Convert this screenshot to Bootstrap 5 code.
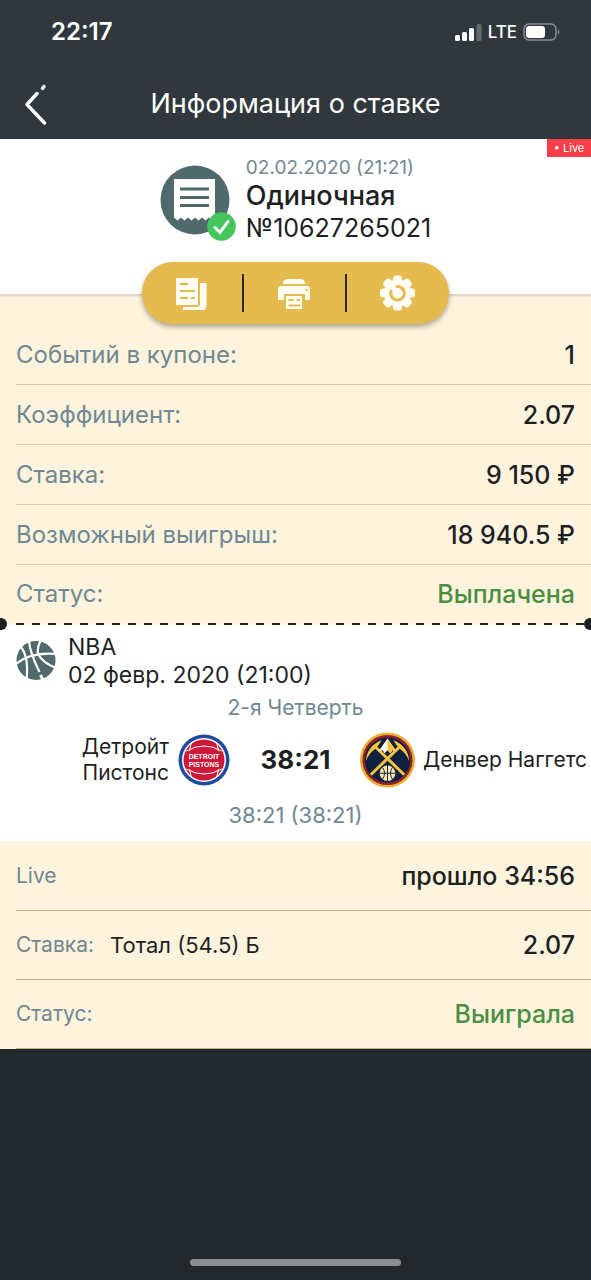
<!DOCTYPE html>
<html lang="ru">
<head>
<meta charset="utf-8">
<meta name="viewport" content="width=device-width, initial-scale=1">
<title>Информация о ставке</title>
<link href="https://cdn.jsdelivr.net/npm/bootstrap@5.3.0/dist/css/bootstrap.min.css" rel="stylesheet">
<style>
  :root {
    --ink: #1d1f23;
    --slate: #30383e;
    --muted: #6f8893;
    --cream: #fef3dd;
    --gold: #e5bb4f;
  }
  body { background: #23282c; color: var(--ink); font-family: Inter, "Liberation Sans", sans-serif; font-size: 24px; line-height: 32px; }
  .app-head { background: var(--slate); color: #fff; }
  .status-bar { height: 64px; padding: 0 30px 0 51px; font-size: 24px; }
  .status-icons { gap: 6px; font-size: 17px; }
  .title-bar { display: grid; grid-template-columns: 72px 1fr 72px; height: 75px; padding-top: 4px; }
  .title-bar h1 { font-size: 27px; line-height: 32px; font-weight: 400; }
  .back-btn { border: 0; padding: 0 0 0 24px; text-align: left; background: none; line-height: 0; }
  .bet-head { padding: 17px 0 50px; border-bottom: 1px solid #dcd6c8; box-shadow: 0 1px 2px rgba(0,0,0,.15); }
  .bet-head .when { font-size: 19px; line-height: 24px; color: var(--muted); }
  .bet-head h2 { font-size: 27px; line-height: 32px; font-weight: 500; }
  .bet-number { font-size: 25px; }
  .live-tag { background: #f53f48; color: #fff; font-size: 11px; line-height: 18px; width: 44px; }
  .tools { width: 307px; height: 62px; margin: -33px auto 1px; border-radius: 31px; background: var(--gold); box-shadow: 0 3px 5px rgba(60,50,20,.4); }
  .tools button { border: 0; background: none; padding: 0; line-height: 0; }
  .tools .divider { width: 2px; height: 38px; background: #2b2a22; }
  .sheet { background: var(--cream); }
  .line-item { margin-left: 16px; padding-right: 16px; height: 60px; border-bottom: 1px solid #d3c8b0; }
  .line-item dt { font-weight: 400; color: var(--muted); }
  .line-item dd { font-size: 25px; font-weight: 500; }
  .line-item .won { color: #4a8f3f; }
  .summary .line-item:last-child { border-bottom: 0; height: 58px; }
  .outcome { padding-top: 1px; }
  .outcome .line-item { height: 69px; border-color: #bdb07f; }
  .outcome dt { font-size: 21px; }
  .outcome .pick { font-size: 22px; }
  .tear { height: 2px; background: repeating-linear-gradient(90deg, #1d1f23 0 8px, transparent 8px 16px) 16px 0 / calc(100% - 22px) 2px no-repeat; }
  .tear::before, .tear::after { content: ""; position: absolute; top: -5px; width: 12px; height: 12px; border-radius: 50%; background: #1d1f23; }
  .tear::before { left: -5px; }
  .tear::after { right: -5px; }
  .event { padding: 8px 0 4px; }
  .event-head { padding-left: 16px; gap: 12px; font-size: 23px; line-height: 28px; }
  .period { font-size: 21px; line-height: 38px; color: var(--muted); }
  .match { height: 66px; font-size: 21px; line-height: 26px; }
  .side { flex: 1 1 0; min-width: 0; }
  .score { width: 129px; font-size: 26px; font-weight: 700; }
  .total { font-size: 22px; line-height: 44px; color: var(--muted); }
  .home-bar { width: 211px; height: 7px; border-radius: 4px; background: #8b8d8f; margin-bottom: 14px; }
</style>
</head>
<body class="min-vh-100 d-flex flex-column overflow-x-hidden">
<header class="app-head">
  <div class="status-bar d-flex justify-content-between align-items-center">
    <span class="fw-semibold">22:17</span>
    <span class="status-icons d-flex align-items-center fw-medium">
      <svg width="27" height="18" viewBox="0 0 27 18" fill="#fff" aria-hidden="true"><rect x="0" y="12" width="5" height="6" rx="1.5"/><rect x="7" y="9" width="5" height="9" rx="1.5"/><rect x="14" y="5" width="5" height="13" rx="1.5"/><rect x="21.500" y="1" width="5" height="17" rx="1.500" opacity=".25"/></svg>
      <span>LTE</span>
      <svg width="38" height="18" viewBox="0 0 38 18" aria-hidden="true"><rect x="1" y="1" width="32" height="16" rx="5" fill="none" stroke="#878c90" stroke-width="1.500"/><rect x="3" y="3" width="19" height="12" rx="3" fill="#fff"/><path d="M35 6q2.500 3 0 6z" fill="#878c90"/></svg>
    </span>
  </div>
  <div class="title-bar align-items-center">
    <button class="back-btn" type="button" aria-label="Назад">
      <svg width="24" height="42" viewBox="0 0 24 42" fill="none" stroke="#fff" stroke-width="3.400" stroke-linecap="round"><path d="M18.500 5.500l1.500-2"/><path d="M13 10.500L3 21.500 20.500 40" stroke-linejoin="round"/></svg>
    </button>
    <h1 class="m-0 text-center text-nowrap">Информация о ставке</h1>
  </div>
</header>

<main>
  <section class="bet-head bg-white position-relative d-flex justify-content-center">
    <span class="live-tag position-absolute top-0 end-0 text-center">• Live</span>
    <div class="d-flex">
      <svg class="mt-2" width="86" height="80" viewBox="0 0 86 80" aria-hidden="true">
        <circle cx="35" cy="36" r="34.500" fill="#506a6b"/>
        <path d="M14 15h41v39l-3 2.500-3-3-3.500 3-3.500-3-3.500 3-3.500-3-3.500 3-3.500-3-3.500 3-3.500-3-3.500 3-3.500-3z" fill="#fff"/>
        <path d="M20 25h29M20 33.500h29M20 41.500h29" stroke="#506a6b" stroke-width="2.800"/>
        <circle cx="61.500" cy="62.500" r="14.300" fill="#45c65c"/>
        <path d="M55 63.500l5 5 8-11" fill="none" stroke="#fff" stroke-width="3" stroke-linecap="round"/>
      </svg>
      <div>
        <div class="when">02.02.2020 (21:21)</div>
        <h2 class="m-0">Одиночная</h2>
        <div class="bet-number">№10627265021</div>
      </div>
    </div>
  </section>

  <section class="sheet">
    <div class="tools position-relative d-flex align-items-center">
      <button class="flex-fill" type="button" aria-label="Копировать">
        <svg width="34" height="34" viewBox="0 0 34 34"><path d="M1 2h22v27H1zM25 7h6.500v22q0 5-4 5H8v-3h14q3 0 3-3z" fill="#fffdf4"/><path d="M5 8h8M5 15h15M5 22h8M16 22h4" stroke="#e5bb4f" stroke-width="2"/></svg>
      </button>
      <span class="divider"></span>
      <button class="flex-fill" type="button" aria-label="Печать">
        <svg width="34" height="34" viewBox="0 0 34 34"><path d="M6 8q0-5 5-5h12q5 0 5 5zM4 10h26q3 0 3 3v11h-5v-6H7v6H1V13q0-3 3-3z" fill="#fffdf4"/><path d="M9 20h16v13H9z" fill="#fffdf4"/><path d="M11.500 24h5M19.500 24h3.500M11.500 29.500h11.500" stroke="#e5bb4f" stroke-width="2"/><circle cx="29.500" cy="14" r="1.300" fill="#e5bb4f"/></svg>
      </button>
      <span class="divider"></span>
      <button class="flex-fill" type="button" aria-label="Настройки">
        <svg width="36" height="36" viewBox="0 0 36 36"><g fill="#fffdf4"><circle cx="17.500" cy="18" r="13.500"/><rect x="13" y=".5" width="9" height="35" rx="3"/><rect x="0" y="13.500" width="35" height="9" rx="3"/><rect x="13" y=".5" width="9" height="35" rx="3" transform="rotate(45 17.500 18)"/><rect x="13" y=".5" width="9" height="35" rx="3" transform="rotate(-45 17.500 18)"/></g><path d="M16 11.600a6.800 6.800 0 1 1-4.500 3.400" fill="none" stroke="#e5bb4f" stroke-width="3"/><path d="M12.500 12.500l4.500 4.500" stroke="#fffdf4" stroke-width="3"/></svg>
      </button>
    </div>
    <dl class="summary m-0">
      <div class="line-item d-flex justify-content-between align-items-center"><dt>Событий в купоне:</dt><dd class="m-0">1</dd></div>
      <div class="line-item d-flex justify-content-between align-items-center"><dt>Коэффициент:</dt><dd class="m-0">2.07</dd></div>
      <div class="line-item d-flex justify-content-between align-items-center"><dt>Ставка:</dt><dd class="m-0">9 150 ₽</dd></div>
      <div class="line-item d-flex justify-content-between align-items-center"><dt>Возможный выигрыш:</dt><dd class="m-0">18 940.5 ₽</dd></div>
      <div class="line-item d-flex justify-content-between align-items-center"><dt>Статус:</dt><dd class="won m-0">Выплачена</dd></div>
    </dl>
    <div class="tear position-relative"></div>
  </section>

  <section class="event bg-white">
    <div class="event-head d-flex align-items-center">
      <svg width="40" height="40" viewBox="0 0 40 40" aria-hidden="true"><circle cx="20" cy="19.500" r="19.500" fill="#506a6b"/><g fill="none" stroke="#fff" stroke-width="2.200"><path d="M0 23Q14 11 40 13"/><path d="M5 6Q13 16 10.500 39"/><path d="M13 0Q14 12 23.500 31"/><path d="M24.500 0Q21 6 22 13Q27 22 40 27"/><path d="M24.500 34l2.500 5" stroke-width="3"/></g></svg>
      <div>
        <div>NBA</div>
        <div>02 февр. 2020 (21:00)</div>
      </div>
    </div>
    <div class="period text-center">2-я Четверть</div>
    <div class="match d-flex align-items-center">
      <div class="side d-flex align-items-center justify-content-end">
        <span class="text-end me-2">Детройт<br>Пистонс</span>
        <svg class="flex-shrink-0" width="54" height="54" viewBox="0 0 54 54" role="img" aria-label="Detroit Pistons">
          <circle cx="27" cy="27" r="25.500" fill="#1d4c9e"/><circle cx="27" cy="27" r="22" fill="#fff"/><circle cx="27" cy="27" r="20.500" fill="#ce1839"/>
          <g fill="none" stroke="#fff" stroke-width="1"><path d="M9 18q18-10 36 0M9 36q18 10 36 0M14 11q-5 16 0 32M40 11q5 16 0 32"/></g>
          <rect x="11" y="18" width="32" height="18" fill="#ce1839"/>
          <g fill="#fff" font-family="'Liberation Sans', sans-serif" font-weight="700" font-size="7" text-anchor="middle"><text x="27" y="26">DETROIT</text><text x="27" y="34">PISTONS</text></g>
        </svg>
      </div>
      <div class="score text-center">38:21</div>
      <div class="side d-flex align-items-center text-nowrap">
        <svg class="flex-shrink-0 me-2" width="55" height="56" viewBox="0 0 56 56" role="img" aria-label="Denver Nuggets">
          <circle cx="28" cy="28" r="28" fill="#edae2b"/><circle cx="28" cy="28" r="25.500" fill="#8b2131"/><circle cx="28" cy="28" r="23" fill="#0e2240"/>
          <g fill="none" stroke="#fbc33c"><path d="M14 13l31 30M42 13L11 43" stroke-width="3"/></g>
          <path d="M6 29Q7 14 22 8Q19 14 15 17Q9 21 6 29zM50 29Q49 14 34 8Q37 14 41 17Q47 21 50 29z" fill="#fbc33c"/>
          <path d="M28 6l-9 13 4-1 2 3 3-3 3 3 2-3 4 1z" fill="#fff"/><path d="M28 6l9 13-4-1-2 3-3-3z" fill="#fbc33c"/>
          <circle cx="28" cy="41.500" r="8" fill="#fde7ab"/><path d="M20 41.500h16M28 33.500v16M23 35.500q4 6 0 12M33 35.500q-4 6 0 12" fill="none" stroke="#0e2240"/>
        </svg>
        <span>Денвер Наггетс</span>
      </div>
    </div>
    <div class="total text-center">38:21 (38:21)</div>
  </section>

  <dl class="sheet outcome m-0">
    <div class="line-item d-flex justify-content-between align-items-center"><dt>Live</dt><dd class="m-0">прошло 34:56</dd></div>
    <div class="line-item d-flex align-items-center"><dt>Ставка:</dt><dd class="pick fw-normal m-0 ms-3">Тотал (54.5) Б</dd><dd class="m-0 ms-auto">2.07</dd></div>
    <div class="line-item d-flex justify-content-between align-items-center"><dt>Статус:</dt><dd class="won m-0">Выиграла</dd></div>
  </dl>
</main>
<footer class="home-bar mt-auto mx-auto"></footer>
<script src="https://cdn.jsdelivr.net/npm/bootstrap@5.3.0/dist/js/bootstrap.bundle.min.js"></script>
</body>
</html>
